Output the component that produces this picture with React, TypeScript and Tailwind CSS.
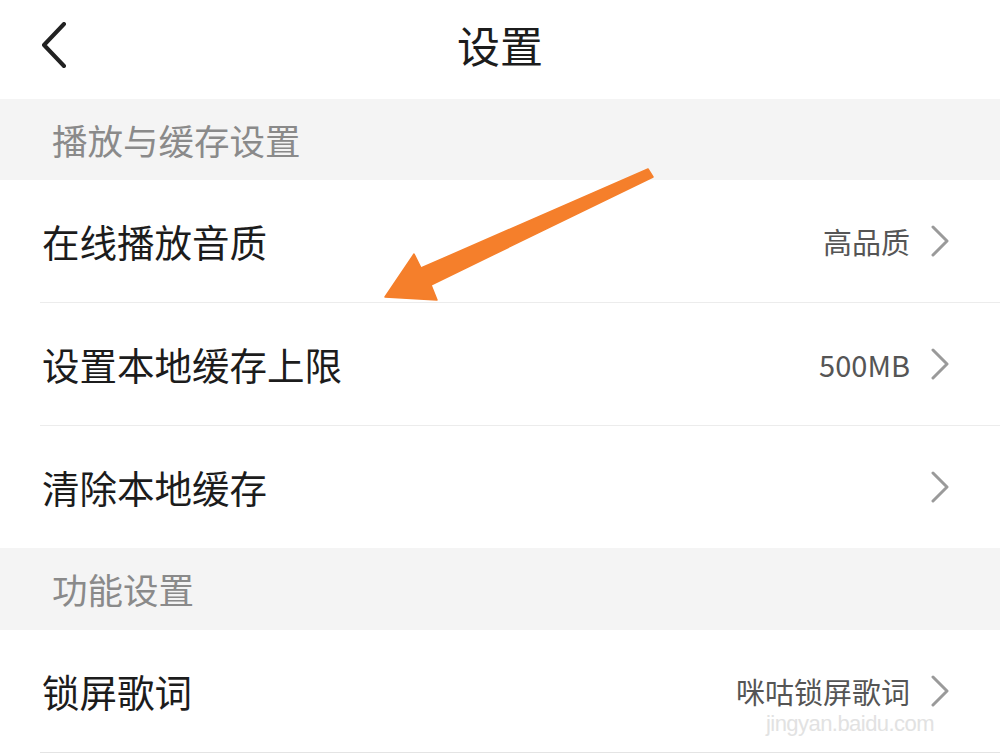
import * as React from "react";

const FONT = '"Noto Sans CJK SC", "Noto Sans", sans-serif';

function Chevron({ className }: { className?: string }) {
  return (
    <svg viewBox="0 0 20 32" className={className} fill="none">
      <path d="M3 2 L17 16 L3 30" stroke="currentColor" strokeWidth="3" strokeLinecap="round" strokeLinejoin="round" />
    </svg>
  );
}

function SectionHeader({ title, h }: { title: string; h: string }) {
  return (
    <div className={`flex items-center bg-[#f4f4f4] pl-[52px] ${h}`}>
      <span className="text-[35.5px] leading-none text-[#8a8a8a]">{title}</span>
    </div>
  );
}

function Row({ label, value, last }: { label: string; value?: string; last?: boolean }) {
  return (
    <div className="flex flex-col">
      <div className="flex h-[122px] items-center justify-between pl-[42px] pr-[50px]">
        <span className="text-[37.5px] leading-none text-[#1c1c1c]">{label}</span>
        <div className="flex items-center gap-[20px]">
          {value && <span className="text-[29px] leading-none text-[#555]">{value}</span>}
          <Chevron className="h-[32px] w-[20px] text-[#9a9a9a]" />
        </div>
      </div>
      <div className={`ml-[40px] h-px ${last ? "bg-[#e4e4e4]" : "bg-[#ececec]"}`} />
    </div>
  );
}

export default function App() {
  return (
    <div className="relative h-[754px] w-[1000px] overflow-hidden bg-white" style={{ fontFamily: FONT }}>
      {/* 导航栏 */}
      <div className="grid h-[99px] grid-cols-[1fr_auto_1fr] items-center pb-[10px]">
        <div className="pl-[40px]">
          <svg viewBox="0 0 28 46" className="h-[46px] w-[28px] text-[#222]" fill="none">
            <path d="M24 2 L4 23 L24 44" stroke="currentColor" strokeWidth="4" strokeLinecap="round" strokeLinejoin="round" />
          </svg>
        </div>
        <h1 className="text-[43px] font-normal leading-none text-[#1c1c1c]">设置</h1>
        <div />
      </div>

      <SectionHeader title="播放与缓存设置" h="h-[81px]" />
      <Row label="在线播放音质" value="高品质" />
      <Row label="设置本地缓存上限" value="500MB" />
      <div className="flex h-[122px] items-center justify-between pl-[42px] pr-[50px]">
        <span className="text-[37.5px] leading-none text-[#1c1c1c]">清除本地缓存</span>
        <Chevron className="h-[32px] w-[20px] text-[#9a9a9a]" />
      </div>
      <SectionHeader title="功能设置" h="h-[82px]" />
      <Row label="锁屏歌词" value="咪咕锁屏歌词" last />

      {/* 橙色箭头标注 */}
      <svg className="pointer-events-none absolute left-0 top-0" width="1000" height="754" viewBox="0 0 1000 754">
        <polygon
          points="385,297 414,254 421,268 648,169 653,177 431,285 437,300"
          fill="#f57f2b"
          stroke="#f57f2b"
          strokeWidth="1.5"
          strokeLinejoin="round"
        />
      </svg>

      {/* 水印 */}
      <div className="pointer-events-none absolute left-[766px] top-[713px] text-[22px] leading-none tracking-tight text-[#e2e2e2]" style={{ fontFamily: '"Liberation Sans", sans-serif' }}>
        jingyan.baidu.com
      </div>
    </div>
  );
}
